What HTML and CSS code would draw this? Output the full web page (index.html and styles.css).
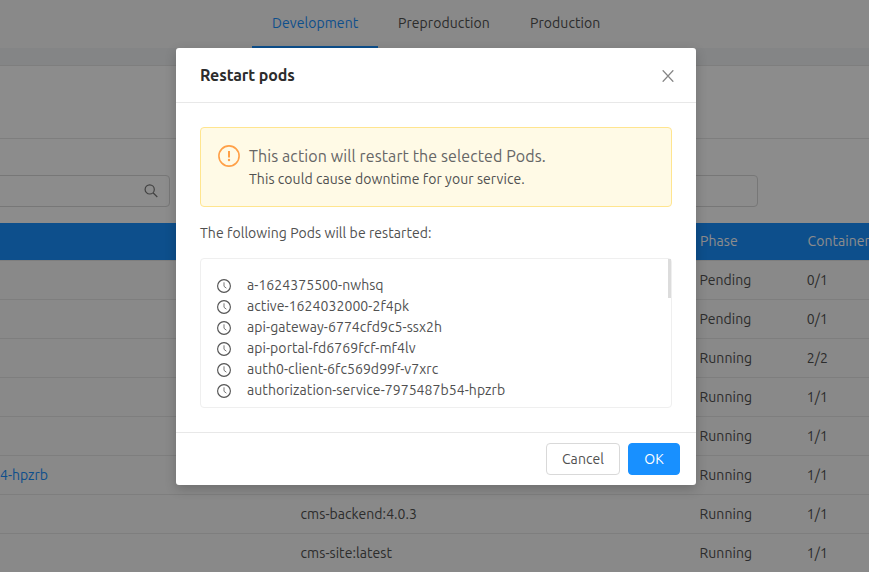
FILE: index.html
```html
<!DOCTYPE html>
<html lang="en">
<head>
<meta charset="utf-8">
<title>Restart pods</title>
<link rel="stylesheet" href="styles.css">
</head>
<body>
<div class="page">
  <nav class="tabs">
    <span class="tab tab-active">Development</span>
    <span class="tab">Preproduction</span>
    <span class="tab">Production</span>
  </nav>
  <div class="band"></div>
  <div class="heading"></div>
  <div class="filters">
    <div class="search">
      <svg width="14" height="14" viewBox="0 0 14 14" fill="none" stroke="currentColor" stroke-width="1.2"><circle cx="5.7" cy="5.4" r="4.6"/><path d="M9 8.8l4.3 4.2"/></svg>
    </div>
    <div class="select"></div>
  </div>
  <div class="table">
    <div class="row head"><span></span><span></span><span>Phase</span><span>Container</span></div>
    <div class="row"><span></span><span></span><span>Pending</span><span>0/1</span></div>
    <div class="row"><span></span><span></span><span>Pending</span><span>0/1</span></div>
    <div class="row"><span></span><span></span><span>Running</span><span>2/2</span></div>
    <div class="row"><span></span><span></span><span>Running</span><span>1/1</span></div>
    <div class="row"><span></span><span></span><span>Running</span><span>1/1</span></div>
    <div class="row"><span class="link">4-hpzrb</span><span></span><span>Running</span><span>1/1</span></div>
    <div class="row"><span></span><span>cms-backend:4.0.3</span><span>Running</span><span>1/1</span></div>
    <div class="row"><span></span><span>cms-site:latest</span><span>Running</span><span>1/1</span></div>
  </div>
</div>
<div class="mask">
  <section class="modal">
    <header class="modal-head">
      <h1>Restart pods</h1>
      <svg class="close" width="12" height="12" viewBox="0 0 12 12" fill="none" stroke="currentColor" stroke-width="1.3"><path d="M.7.3l10.6 11.4M11.3.3L.7 11.7"/></svg>
    </header>
    <div class="modal-body">
      <div class="alert">
        <svg width="22" height="22" viewBox="0 0 22 22"><circle cx="11" cy="11" r="10.1" fill="none" stroke="currentColor" stroke-width="1.6"/><path d="M10 6h2v6.5h-2z" fill="currentColor"/><circle cx="11" cy="15" r="1.2" fill="currentColor"/></svg>
        <div class="alert-text">
          <p class="alert-title">This action will restart the selected Pods.</p>
          <p class="alert-desc">This could cause downtime for your service.</p>
        </div>
      </div>
      <p class="intro">The following Pods will be restarted:</p>
      <div class="list-box">
        <ul class="list">
          <li><svg class="clock" viewBox="0 0 14 14"><use href="#clock"/></svg><span>a-1624375500-nwhsq</span></li>
          <li><svg class="clock" viewBox="0 0 14 14"><use href="#clock"/></svg><span>active-1624032000-2f4pk</span></li>
          <li><svg class="clock" viewBox="0 0 14 14"><use href="#clock"/></svg><span>api-gateway-6774cfd9c5-ssx2h</span></li>
          <li><svg class="clock" viewBox="0 0 14 14"><use href="#clock"/></svg><span>api-portal-fd6769fcf-mf4lv</span></li>
          <li><svg class="clock" viewBox="0 0 14 14"><use href="#clock"/></svg><span>auth0-client-6fc569d99f-v7xrc</span></li>
          <li><svg class="clock" viewBox="0 0 14 14"><use href="#clock"/></svg><span>authorization-service-7975487b54-hpzrb</span></li>
        </ul>
        <div class="thumb"></div>
      </div>
    </div>
    <footer class="modal-foot">
      <button class="btn cancel">Cancel</button>
      <button class="btn ok">OK</button>
    </footer>
  </section>
</div>
<svg width="0" height="0" class="defs"><symbol id="clock" viewBox="0 0 14 14"><circle cx="7" cy="7" r="6.4" fill="none" stroke="#555" stroke-width="1.15"/><path d="M7 3.3v4l2.4 1.9" fill="none" stroke="#777" stroke-width="1"/></symbol></svg>
</body>
</html>
```
FILE: styles.css
```css
* { box-sizing: border-box; margin: 0; padding: 0; }
body {
  width: 869px; height: 572px; overflow: hidden; background: #fff;
  font: 14px/22px Ubuntu, "Noto Sans", sans-serif; letter-spacing: 0.07px;
  color: #505050; white-space: nowrap;
}
.page { width: 869px; height: 572px; overflow: hidden; }
.tabs { display: flex; height: 48px; padding-left: 252px; background: #f9f9f9; }
.tab { padding: 12px 20px 0; }
.tab-active { color: #1890ff; border-bottom: 2px solid #1890ff; width: 126px; }
.tab:nth-child(2) { width: 132px; }
.band { height: 18px; background: #f0f2f5; border-bottom: 1px solid #e6e6e6; }
.heading { height: 73px; border-bottom: 1px solid #e6e6e6; }
.filters { display: flex; gap: 20px; height: 84px; padding-top: 36px; }
.search, .select { height: 32px; border: 1px solid #d9d9d9; border-radius: 4px; }
.search {
  width: 180px; margin-left: -10px; padding-right: 11px;
  display: flex; align-items: center; justify-content: flex-end; color: #777;
}
.select { width: 568px; }
.row {
  display: grid; grid-template-columns: 300.5px 399px 107.3px 1fr; align-items: center;
  height: 39px; background: #f9f9f9; border-bottom: 1px solid #e6e6e6;
}
.head { height: 38px; padding-bottom: 1px; background: #1890ff; color: #fff; grid-template-columns: 300.5px 399.5px 107.5px 1fr; }
.link { color: #1890ff; letter-spacing: 0; }
.mask {
  position: absolute; inset: 0; background: rgba(0,0,0,.45);
  display: flex; justify-content: center; align-items: flex-start; padding: 48px 0 0 3px;
}
.modal {
  width: 520px; height: 437px; background: #fff; border-radius: 3px;
  box-shadow: 0 4px 12px rgba(0,0,0,.2);
}
.modal-head {
  display: flex; align-items: center; justify-content: space-between;
  height: 55px; padding: 0 22px 0 24px; border-bottom: 1px solid #e8e8e8;
}
h1 { font-size: 16px; line-height: 22px; font-weight: 600; color: #2c2c2c; letter-spacing: -0.1px; }
.close { color: #858585; margin-top: 1px; }
.modal-body { padding: 24px 24px 0; height: 329px; }
.alert {
  display: flex; gap: 9px; height: 80px; padding: 17px; background: #fffae6;
  border: 1px solid #ffe58f; border-radius: 4px; color: #ffa048;
}
.alert-text { color: #505050; margin-top: -1px; }
.alert-title { font-size: 16px; line-height: 24px; color: #666; letter-spacing: 0.1px; }
.alert-desc { line-height: 22px; }
.intro { margin: 15px 0 14px; }
.list-box {
  display: flex; justify-content: space-between; height: 150px;
  border: 1px solid #efefef; border-radius: 4px;
}
.list { list-style: none; padding: 15px 0 0 16px; }
.list li { display: flex; align-items: center; gap: 16px; height: 21px; }
.clock { width: 14px; height: 14px; margin-top: 2px; }
.thumb { width: 3px; height: 39px; background: #dcdcdc; }
.modal-foot {
  display: flex; justify-content: flex-end; gap: 8px; height: 53px;
  padding: 10px 16px; border-top: 1px solid #e8e8e8;
}
.btn {
  height: 32px; border-radius: 4px; border: 1px solid #d9d9d9; background: #fff;
  font: inherit; letter-spacing: inherit; color: #505050; width: 74px;
}
.ok { width: 52px; background: #1890ff; border-color: #1890ff; color: #fff; }
.defs { position: absolute; }
```
